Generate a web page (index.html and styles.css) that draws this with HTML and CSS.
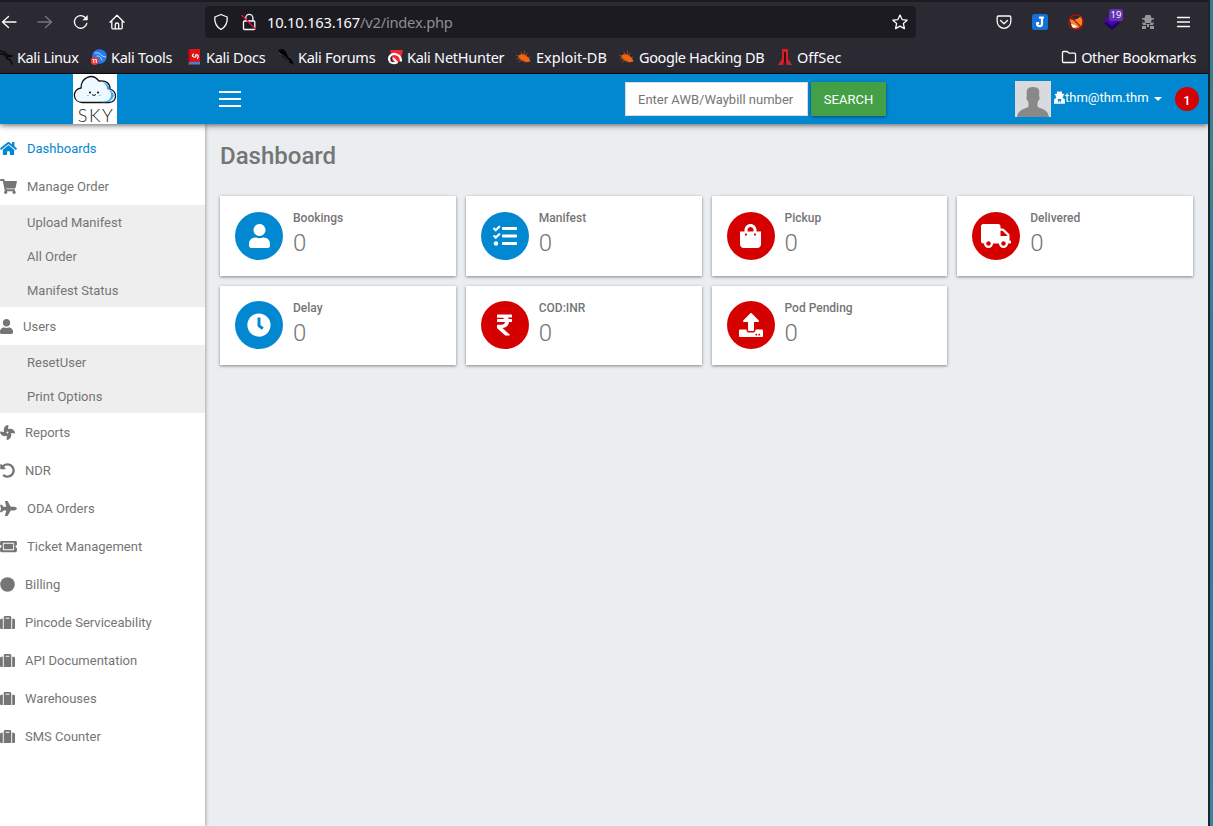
FILE: index.html
```html
<!DOCTYPE html>
<html lang="en">
<head>
<meta charset="utf-8">
<title>Dashboard</title>
<link rel="stylesheet" href="styles.css">
</head>
<body>
<svg class="defs" width="0" height="0">
  <symbol id="suitcase" viewBox="0 0 512 512"><path d="M128 480h256V80c0-26.500-21.500-48-48-48H176c-26.500 0-48 21.500-48 48v400zm64-384h128v32H192V96zm320 80v256c0 26.500-21.500 48-48 48h-48V128h48c26.500 0 48 21.500 48 48zM96 480H48c-26.500 0-48-21.500-48-48V176c0-26.500 21.500-48 48-48h48v352z"/></symbol>
  <symbol id="user" viewBox="0 0 448 512"><path d="M224 256c70.700 0 128-57.300 128-128S294.700 0 224 0 96 57.300 96 128s57.300 128 128 128zm89.600 32h-16.700c-22.200 10.200-46.900 16-72.900 16s-50.600-5.800-72.900-16h-16.700C60.200 288 0 348.200 0 422.400V464c0 26.500 21.500 48 48 48h352c26.500 0 48-21.500 48-48v-41.600c0-74.200-60.200-134.400-134.400-134.400z"/></symbol>
  <symbol id="bug" viewBox="0 0 16 16"><path d="M2 7Q5.500 3.500 9.500 6l3.500 3 1.500 3.500-4 .8-5-1.800-3-3z" fill="#f26411" stroke="none"/><path d="M1 10h3M3 13l3-2M5 3l1 3M8.500 2l-.5 4M11 4l-1 3M0 6l3 1.500M14 8l-2 1M8 13l-1-2" stroke="#a94d1e" stroke-width=".8" fill="none"/></symbol>
</svg>
<div class="window">
  <div class="browser">
    <div class="toolbar">
      <div class="nav">
        <svg width="16" height="16" viewBox="0 0 16 16"><path d="M15 8H1.500M7.500 2.500 1.500 8l6 5.500"/></svg>
        <svg class="dim" width="16" height="16" viewBox="0 0 16 16"><path d="M1 8h13.500M8.500 2.500l6 5.500-6 5.500"/></svg>
        <svg width="16" height="16" viewBox="0 0 16 16"><path d="M13.800 9.500A6.300 6.300 0 1 1 12 3.300l1.500 1.800"/><path d="M14.700 1v5.300H9.400z" class="solid"/></svg>
        <svg width="16" height="16" viewBox="0 0 16 16"><path d="M1 8.300 8 1.200l7 7.100M2.800 7v6.800q0 1 1 1h8.400q1 0 1-1V7M6.300 14.500v-4q0-1.500 1.700-1.500t1.700 1.500v4"/></svg>
      </div>
      <div class="urlbar">
        <svg width="16" height="18" viewBox="0 0 16 18"><path d="M8 1.500 14.200 4q.7 8.500-6.200 12.500Q1.100 12.500 1.800 4z"/></svg>
        <svg width="16" height="18" viewBox="0 0 16 18"><path d="M4.700 8V5a3.600 3.600 0 0 1 7.200 0v3M3.500 8h9.300q1 0 1 1v6.500q0 1-1 1H3.500q-1 0-1-1V9q0-1 1-1z"/><path d="M1 2.500 14.500 16" class="slash"/></svg>
        <div class="url">10.10.163.167<span>/v2/index.php</span></div>
        <svg class="star" width="16" height="16" viewBox="0 0 16 16"><path d="m8 1 2.100 4.600 5 .6-3.700 3.400 1 5L8 12.100l-4.400 2.500 1-5L.9 6.200l5-.6z"/></svg>
      </div>
      <div class="addons">
        <svg width="16" height="16" viewBox="0 0 16 16"><path d="M2.500 2h11q1.300 0 1.300 1.300V7.500a6.800 6.800 0 0 1-13.600 0V3.300Q1.200 2 2.500 2zM4.500 6.500 8 9.800l3.500-3.300"/></svg>
        <svg width="16" height="16" viewBox="0 0 16 16"><rect width="16" height="16" rx="2.500" fill="#1370d8" stroke="none"/><path d="M7.800 3.700h3.200M10 3.700v6a2.500 2.500 0 0 1-5 0v-.500h1.200" stroke-width="2.200"/></svg>
        <svg width="16" height="16" viewBox="0 0 16 16"><path d="m1.500 5 3.500 1 4-1 4.500-3 1 5-1 5-5.500 3-4-2z" fill="#f08a24" stroke="none"/><path d="m3 10 4 1 2 2-4 1z" fill="#fff" stroke="none"/><circle cx="8" cy="8" r="7.200" stroke="#b80d12"/><path d="m3 3 10 10" stroke="#b80d12"/></svg>
        <div class="layers"><svg width="16" height="16" viewBox="0 0 16 16"><path d="m0 9 8-5 8 5-8 7z" fill="#20006b" stroke="none"/><path d="m0 6 8-5 8 5-8 6z" fill="#4b06a8" stroke="none"/></svg><span>19</span></div>
        <svg width="16" height="16" viewBox="0 0 16 16"><path d="M5.500 1h5l1 3H14v1.500h-2L10.500 9h-5L4 5.500H2V4h2.500zM2 8.500h3L7 11H3zM14 8.500h-3L9 11h4zM2 15v-3h4v3zM10 15v-3h4v3zM7 10h2v3H7z" fill="#96959b" stroke="none"/></svg>
        <svg width="14" height="16" viewBox="0 0 14 16"><path d="M1.500 3.500h12M1.500 8h12M1.500 12.500h12"/></svg>
      </div>
    </div>
    <div class="bookmarks">
      <div class="bm tight"><svg width="16" height="16" viewBox="0 0 16 16"><path d="M2 2q6 0 8 4l5 1q-7 0-5 3 4 0 5 5M3 5q4-1 5 2" stroke="#09090b" stroke-width="1.600"/></svg>Kali Linux</div>
      <div class="bm"><svg width="16" height="16" viewBox="0 0 16 16"><circle cx="8.500" cy="7.500" r="7.300" fill="#2878f0" stroke="none"/><path d="M4 4q5-1 7 3l3.500 1M6 7q3-1 5 4" stroke="#b9dcff" stroke-width="1"/><circle cx="3.500" cy="12" r="4" fill="#ef3634" stroke="none"/><path d="M1.800 10.500h1v3M4.300 10.500h1v3" stroke="#fff" stroke-width="1"/></svg>Kali Tools</div>
      <div class="bm"><svg width="16" height="16" viewBox="0 0 16 16"><path d="M2 0h12v13H2z" fill="#e01414" stroke="none"/><path d="M2 0h2v16H2z" fill="#9f1018" stroke="none"/><path d="M3 13h11v2.500H3z" fill="#4084d6" stroke="none"/><path d="M7.500 5Q5 7.500 8 8t1.500-1.500Q10 5 11.500 6t0 3.500" stroke="#fff" stroke-width="1.100"/></svg>Kali Docs</div>
      <div class="bm"><svg width="16" height="16" viewBox="0 0 16 16"><path d="m0 1 5-1 3 3 2 5 4 3 2 5-4-2-3-3-4-3z" fill="#020203" stroke="none"/><path d="m1 4 5 3 5 5" stroke="#56555c" stroke-width=".7"/></svg>Kali Forums</div>
      <div class="bm"><svg width="16" height="16" viewBox="0 0 16 16"><path d="M3 1h13l-3 12H6z" fill="#f52735" stroke="none"/><path d="M2.500 11.500A5 4.800 0 0 1 9.500 5.500q4 1 4.500 6" stroke="#fff" stroke-width="2.300"/><path d="M3 13q3 2 7 .5L6.500 9.500" stroke="#fff" stroke-width="2"/></svg>Kali NetHunter</div>
      <div class="bm wide"><svg width="16" height="16"><use href="#bug"/></svg>Exploit-DB</div>
      <div class="bm tight"><svg width="16" height="16"><use href="#bug"/></svg>Google Hacking DB</div>
      <div class="bm wide"><svg width="16" height="16" viewBox="0 0 16 16"><path d="M5 0h6v10l4 6h-5l-1-4H7l-1 4H1l4-6z" fill="#d91f26" stroke="none"/><path d="M7 3h2v10H7z" fill="#420b10" stroke="none"/></svg>OffSec</div>
      <div class="bm tight"><svg width="16" height="16" viewBox="0 0 16 16"><path d="M2.500 2.500h3.700L8 4.200h5.500q1 0 1 1v7.300q0 1-1 1h-11q-1 0-1-1v-9q0-1 1-1z"/></svg>Other Bookmarks</div>
    </div>
  </div>
  <header class="header">
    <svg class="logo" width="44" height="50" viewBox="0 0 44 50"><path fill="#fff" d="M0 0h44v50H0z"/><path d="M9 28.500C-1 28-1 15 8 14 8 4 19-2 26 7c8-1 11 3 11 8 8 3 7 13-1 13.500z" fill="#edf8ff" stroke="#111" stroke-width="1.300"/><path d="M29 8q8 1 7 8 9 4 1 11-3 2-9 1 11 0 10-9-1-3-4-4 0-5-5-7z" fill="#36aaf5"/><path d="M19 20.500q2 2 4 0" stroke="#111" fill="none"/><circle cx="17" cy="18.500" r="1"/><circle cx="25" cy="18.500" r="1"/><path d="M14 21.500h2M26 21.500h2" stroke="#79cdfa"/><text x="22.300" y="48" text-anchor="middle" class="logo-text" textLength="35">SKY</text></svg>
    <div class="burger"><i></i><i></i><i></i></div>
    <input class="query" type="text" placeholder="Enter AWB/Waybill number">
    <button class="search">SEARCH</button>
    <svg class="avatar" width="36" height="36" viewBox="0 0 36 36"><path fill="#d8dadd" d="M0 0h36v36H0z"/><path d="M18 6c6 0 7 3 6 9 1 1 1 4-1 5-1 5-1 6 2 7 6 2 8 4 9 9H2c1-5 3-7 9-9 3-1 3-2 2-7-2-1-2-4-1-5-1-6 0-9 6-9z" fill="#898989"/></svg>
    <svg class="agent" width="11" height="13" viewBox="0 0 11 13"><path fill="#fff" fill-rule="evenodd" d="M3.500.3Q5.500 1 7.500.3L8.500 3h1.700v1H9.500Q9.300 6.300 8.500 7l2 .7Q11 9 11 12.700H0Q0 9 .5 7.700l2-.7Q1.700 6.300 1.500 4H.8V3h1.700zM3.500 8l1.300 4 .7-3 .7 3 1.300-4z"/></svg>
    <span class="email">thm@thm.thm</span>
    <i class="caret"></i>
    <span class="count">1</span>
  </header>
  <div class="body">
    <nav class="sidebar">
      <a class="item active"><svg width="17" height="15" viewBox="0 0 576 512"><path d="M280.370 148.260L96 300.110V464a16 16 0 0 0 16 16l112.060-.29a16 16 0 0 0 15.920-16V368a16 16 0 0 1 16-16h64a16 16 0 0 1 16 16v95.640a16 16 0 0 0 16 16.050L464 480a16 16 0 0 0 16-16V300L295.670 148.260a12.190 12.190 0 0 0-15.300 0zM571.600 251.470L488 182.560V44.050a12 12 0 0 0-12-12h-56a12 12 0 0 0-12 12v72.610L318.470 43a48 48 0 0 0-61 0L4.340 251.470a12 12 0 0 0-1.600 16.900l25.500 31A12 12 0 0 0 45.150 301l235.220-193.740a12.190 12.190 0 0 1 15.300 0L530.900 301a12 12 0 0 0 16.900-1.600l25.500-31a12 12 0 0 0-1.700-16.930z"/></svg>Dashboards</a>
      <a class="item"><svg width="17" height="15" viewBox="0 0 576 512"><path d="M528.120 301.319l47.273-208C578.806 78.301 567.391 64 551.990 64H159.208l-9.166-44.810C147.758 8.021 137.930 0 126.529 0H24C10.745 0 0 10.745 0 24v16c0 13.255 10.745 24 24 24h69.883l70.248 343.435C147.325 417.100 136 435.222 136 456c0 30.928 25.072 56 56 56s56-25.072 56-56c0-15.674-6.447-29.835-16.824-40h209.647C430.447 426.165 424 440.326 424 456c0 30.928 25.072 56 56 56s56-25.072 56-56c0-22.172-12.888-41.332-31.579-50.405l5.517-24.276c3.413-15.018-8.002-29.319-23.403-29.319H218.117l-6.545-32h293.145c11.206 0 20.920-7.754 23.403-18.681z"/></svg>Manage Order</a>
      <div class="sub"><a>Upload Manifest</a><a>All Order</a><a>Manifest Status</a></div>
      <a class="item"><svg width="13" height="15"><use href="#user"/></svg>Users</a>
      <div class="sub"><a>ResetUser</a><a>Print Options</a></div>
      <a class="item"><svg width="15" height="15" viewBox="0 0 512 512"><path d="M352.570 128c-28.090 0-54.090 4.520-77.060 12.860l12.410-123.110C289 7.310 279.810-1.180 269.330.130 189.630 10.130 128 77.640 128 159.430c0 28.090 4.520 54.090 12.860 77.060L17.750 224.080C7.310 223-1.180 232.190.130 242.670c10 79.700 77.510 141.330 159.300 141.330 28.090 0 54.090-4.520 77.060-12.860l-12.410 123.110c-1.050 10.430 8.110 18.930 18.590 17.620 79.700-10 141.330-77.510 141.330-159.300 0-28.090-4.520-54.090-12.860-77.060l123.110 12.410c10.440 1.050 18.930-8.110 17.620-18.590-10-79.700-77.510-141.330-159.300-141.330zM256 288a32 32 0 1 1 32-32 32 32 0 0 1-32 32z"/></svg>Reports</a>
      <a class="item"><svg width="15" height="15" viewBox="0 0 512 512"><path d="M255.545 8c-66.269.119-126.438 26.233-170.860 68.685L48.971 40.971C33.851 25.851 8 36.559 8 57.941V192c0 13.255 10.745 24 24 24h134.059c21.382 0 32.090-25.851 16.971-40.971l-41.750-41.750c30.864-28.899 70.801-44.907 113.230-45.273 92.398-.798 170.283 73.977 169.484 169.442C423.236 348.009 349.816 424 256 424c-41.127 0-79.997-14.678-110.630-41.556-4.743-4.161-11.906-3.908-16.368.553L89.340 422.659c-4.872 4.872-4.631 12.815.482 17.433C133.798 479.813 192.074 504 256 504c136.966 0 247.999-111.033 248-247.998C504.001 119.193 392.354 7.755 255.545 8z"/></svg>NDR</a>
      <a class="item"><svg width="17" height="15" viewBox="0 0 576 512"><path d="M480 192H365.710L260.610 8.060A16.014 16.014 0 0 0 246.710 0h-65.500c-10.630 0-18.300 10.170-15.380 20.390L214.860 192H112l-43.200-57.600c-3.020-4.030-7.770-6.400-12.800-6.400H16.010C5.600 128-2.040 137.780.490 147.880L32 256 .490 364.120C-2.040 374.220 5.600 384 16.010 384H56c5.040 0 9.780-2.370 12.800-6.400L112 320h102.860l-49.030 171.600c-2.920 10.220 4.750 20.400 15.380 20.400h65.500c5.740 0 11.040-3.080 13.890-8.060L365.710 320H480c35.350 0 96-28.650 96-64s-60.650-64-96-64z"/></svg>ODA Orders</a>
      <a class="item"><svg width="17" height="15" viewBox="0 0 576 512"><path d="M128 160h320v192H128V160zm400 96c0 26.510 21.490 48 48 48v96c0 26.510-21.490 48-48 48H48c-26.510 0-48-21.490-48-48v-96c26.510 0 48-21.490 48-48s-21.490-48-48-48v-96c0-26.510 21.490-48 48-48h480c26.510 0 48 21.490 48 48v96c-26.510 0-48 21.490-48 48zm-48-104c0-13.255-10.745-24-24-24H120c-13.255 0-24 10.745-24 24v208c0 13.255 10.745 24 24 24h336c13.255 0 24-10.745 24-24V152z"/></svg>Ticket Management</a>
      <a class="item"><svg width="15" height="15" viewBox="0 0 512 512"><circle cx="256" cy="256" r="248"/></svg>Billing</a>
      <a class="item"><svg width="15" height="15"><use href="#suitcase"/></svg>Pincode Serviceability</a>
      <a class="item"><svg width="15" height="15"><use href="#suitcase"/></svg>API Documentation</a>
      <a class="item"><svg width="15" height="15"><use href="#suitcase"/></svg>Warehouses</a>
      <a class="item"><svg width="15" height="15"><use href="#suitcase"/></svg>SMS Counter</a>
    </nav>
    <main class="main">
      <h1>Dashboard</h1>
      <div class="cards">
        <div class="card"><div class="disc blue"><svg width="21" height="24"><use href="#user"/></svg></div><div class="stat"><b>Bookings</b><span>0</span></div></div>
        <div class="card"><div class="disc blue"><svg width="24" height="24" viewBox="0 0 512 512"><path d="M139.610 35.500a12 12 0 0 0-17 0L58.930 98.810l-22.700-22.120a12 12 0 0 0-17 0L3.530 92.410a12 12 0 0 0 0 17l47.590 47.400a12.780 12.780 0 0 0 17.610 0l15.590-15.620L156.520 69a12.090 12.090 0 0 0 .09-17zm0 159.190a12 12 0 0 0-17 0l-63.680 63.720-22.700-22.100a12 12 0 0 0-17 0L3.530 252a12 12 0 0 0 0 17L51 316.500a12.770 12.770 0 0 0 17.600 0l15.700-15.690 72.200-72.220a12 12 0 0 0 .09-16.900zM64 368c-26.490 0-48.590 21.500-48.590 48S37.530 464 64 464a48 48 0 0 0 0-96zm432 16H208a16 16 0 0 0-16 16v32a16 16 0 0 0 16 16h288a16 16 0 0 0 16-16v-32a16 16 0 0 0-16-16zm0-320H208a16 16 0 0 0-16 16v32a16 16 0 0 0 16 16h288a16 16 0 0 0 16-16V80a16 16 0 0 0-16-16zm0 160H208a16 16 0 0 0-16 16v32a16 16 0 0 0 16 16h288a16 16 0 0 0 16-16v-32a16 16 0 0 0-16-16z"/></svg></div><div class="stat"><b>Manifest</b><span>0</span></div></div>
        <div class="card"><div class="disc red"><svg width="21" height="24" viewBox="0 0 448 512"><path d="M352 160v-32C352 57.420 294.579 0 224 0 153.420 0 96 57.420 96 128v32H0v272c0 44.183 35.817 80 80 80h288c44.183 0 80-35.817 80-80V160h-96zm-192-32c0-35.290 28.710-64 64-64s64 28.710 64 64v32H160v-32zm160 120c-13.255 0-24-10.745-24-24s10.745-24 24-24 24 10.745 24 24-10.745 24-24 24zm-192 0c-13.255 0-24-10.745-24-24s10.745-24 24-24 24 10.745 24 24-10.745 24-24 24z"/></svg></div><div class="stat"><b>Pickup</b><span>0</span></div></div>
        <div class="card"><div class="disc red"><svg width="30" height="24" viewBox="0 0 640 512"><path d="M624 352h-16V243.900c0-12.700-5.100-24.900-14.100-33.900L494 110.100c-9-9-21.200-14.100-33.900-14.100H416V48c0-26.500-21.500-48-48-48H48C21.500 0 0 21.500 0 48v320c0 26.500 21.500 48 48 48h16c0 53 43 96 96 96s96-43 96-96h128c0 53 43 96 96 96s96-43 96-96h48c8.800 0 16-7.200 16-16v-32c0-8.800-7.200-16-16-16zM160 464c-26.500 0-48-21.500-48-48s21.500-48 48-48 48 21.500 48 48-21.500 48-48 48zm320 0c-26.500 0-48-21.500-48-48s21.500-48 48-48 48 21.500 48 48-21.500 48-48 48zm80-208H416V144h44.100l99.900 99.900V256z"/></svg></div><div class="stat"><b>Delivered</b><span>0</span></div></div>
        <div class="card"><div class="disc blue"><svg width="24" height="24" viewBox="0 0 512 512"><path d="M256,8C119,8,8,119,8,256S119,504,256,504,504,393,504,256,393,8,256,8Zm92.490,313h0l-20,25a16,16,0,0,1-22.490,2.500h0l-67-49.720a40,40,0,0,1-15-31.230V112a16,16,0,0,1,16-16h32a16,16,0,0,1,16,16V256l58,42.500A16,16,0,0,1,348.490,321Z"/></svg></div><div class="stat"><b>Delay</b><span>0</span></div></div>
        <div class="card"><div class="disc red"><svg width="15" height="24" viewBox="0 0 320 512"><path d="M308 96c6.627 0 12-5.373 12-12V44c0-6.627-5.373-12-12-12H12C5.373 32 0 37.373 0 44v44.748c0 6.627 5.373 12 12 12h85.280c27.308 0 48.261 9.958 60.970 27.252H12c-6.627 0-12 5.373-12 12v40c0 6.627 5.373 12 12 12h158.757c-6.217 36.086-32.961 58.632-74.757 58.632H12c-6.627 0-12 5.373-12 12v53.012c0 3.349 1.400 6.546 3.861 8.818l165.052 152.356a12.001 12.001 0 0 0 8.139 3.182h82.562c10.924 0 16.166-13.408 8.139-20.818L116.871 319.906c76.499-2.340 131.144-53.395 138.318-127.906H308c6.627 0 12-5.373 12-12v-40c0-6.627-5.373-12-12-12h-58.690c-3.486-11.541-8.280-22.246-14.252-32H308z"/></svg></div><div class="stat"><b>COD:INR</b><span>0</span></div></div>
        <div class="card"><div class="disc red"><svg width="24" height="24" viewBox="0 0 512 512"><path d="M296 384h-80c-13.300 0-24-10.700-24-24V192h-87.700c-17.800 0-26.700-21.500-14.100-34.100L242.300 5.700c7.500-7.500 19.800-7.500 27.300 0l152.200 152.200c12.600 12.600 3.700 34.100-14.100 34.100H320v168c0 13.300-10.700 24-24 24zm216-8v112c0 13.300-10.700 24-24 24H24c-13.300 0-24-10.700-24-24V376c0-13.300 10.700-24 24-24h136v8c0 30.900 25.100 56 56 56h80c30.900 0 56-25.100 56-56v-8h136c13.300 0 24 10.700 24 24zm-124 88c0-11-9-20-20-20s-20 9-20 20 9 20 20 20 20-9 20-20zm64 0c0-11-9-20-20-20s-20 9-20 20 9 20 20 20 20-9 20-20z"/></svg></div><div class="stat"><b>Pod Pending</b><span>0</span></div></div>
      </div>
    </main>
  </div>
</div>
</body>
</html>
```
FILE: styles.css
```css
* { box-sizing: border-box; }
body { margin: 0; width: 1213px; height: 826px; overflow: hidden; background: linear-gradient(#327b91, #3c8198 20%, #3279a0 50%, #3783a0); font-family: Roboto, sans-serif; font-size: 13px; color: #757575; }
.defs { position: absolute; }
svg { display: block; flex: none; }
.window { width: 1210px; height: 826px; border-right: 2px solid #20242c; display: flex; flex-direction: column; overflow: hidden; }

/* Browser chrome */
.browser { height: 74px; flex: none; background: #2b2a33; border-top: 2px solid #1c1b22; border-bottom: 1px solid #0c0c0d; color: #fbfbfe; font-family: "Noto Sans", sans-serif; }
.browser svg { fill: none; stroke: #fbfbfe; stroke-width: 1.3; stroke-linecap: round; stroke-linejoin: round; }
.browser svg .solid { fill: #fbfbfe; stroke: none; }
.browser svg .slash { stroke: #e2123f; }
.browser svg.dim { stroke: #77767d; }
.toolbar { height: 40px; display: flex; align-items: center; }
.nav { width: 205px; display: flex; gap: 20px; padding-left: 1px; }
.urlbar { width: 711px; height: 32px; border-radius: 4px; background: #1c1b22; display: flex; align-items: center; gap: 12px; padding: 0 8px; }
.url { font-size: 14.7px; flex: 1; margin-left: -2px; letter-spacing: -.22px; }
.url span { color: #8f8e96; }
.addons { display: flex; gap: 20px; margin-left: 80px; align-items: center; }
.layers { position: relative; }
.layers span { position: absolute; left: 5px; top: -5px; width: 14px; height: 12px; border-radius: 2px; background: #6232b5; font-size: 9.5px; line-height: 12px; text-align: center; }
.bookmarks { height: 29px; display: grid; grid-template-columns: 94px 95px 92px 109px 129px 103px 158px 1fr auto; margin-left: -3px; padding-right: 12px; align-items: center; font-size: 14.5px; letter-spacing: -.25px; }
.bm { display: flex; gap: 4px; align-items: center; white-space: nowrap; }
.tight { letter-spacing: -.38px; }
.wide { letter-spacing: 0; }

/* Application header */
.header { height: 50px; flex: none; background: #0288d1; box-shadow: 0 1px 6px rgba(0,0,0,.65); position: relative; z-index: 1; display: flex; align-items: center; padding-left: 73px; }
.logo { overflow: visible; }
.logo-text { font: 300 18px Lato, sans-serif; fill: #222; }
.burger { width: 22px; height: 16px; margin-left: 102px; display: flex; flex-direction: column; justify-content: space-between; }
.burger i { height: 2px; background: #fff; }
.query { width: 183px; height: 34px; margin-left: 384px; border: 1px solid #dcdcdc; background: #fff; padding: 0 12px; font: 13px Roboto, sans-serif; }
.query::placeholder { color: #757575; opacity: 1; }
.search { width: 75px; height: 34px; margin-left: 3px; padding: 0; border: 0; background: #43a047; color: #fff; font: 13px Roboto, sans-serif; box-shadow: 0 1px 3px rgba(0,0,0,.45); }
.avatar { margin-left: 129px; }
.agent { margin-left: 3px; margin-bottom: 3px; }
.email { color: #fff; margin-bottom: 3px; width: 84px; }
.caret { border: 4px solid transparent; border-top-color: #fff; border-bottom: 0; margin-left: 5px; }
.count { width: 24px; height: 24px; border-radius: 50%; background: #d50000; color: #fff; margin-left: 13px; text-align: center; line-height: 27px; font-weight: 500; }

/* Sidebar */
.body { flex: 1; display: flex; position: relative; z-index: 0; }
.sidebar { width: 205px; background: #fff; padding-top: 5px; box-shadow: 0 1px 4px rgba(0,0,0,.45); z-index: 0; }
.item { height: 38px; display: flex; align-items: center; gap: 10px; }
.item svg { fill: #757575; }
.active { color: #0288d1; }
.active svg { fill: #0288d1; }
.sub { background: #eee; }
.sub a { display: flex; align-items: center; height: 34px; padding-left: 27px; }

/* Dashboard */
.main { flex: 1; background: #eaeef1; padding: 18px 15px 0; }
h1 { margin: 0; font-size: 24px; line-height: 28px; font-weight: 500; height: 54px; }
.cards { display: grid; grid-template-columns: repeat(4, 1fr); grid-template-rows: 80px 79px; gap: 10px; }
.card { background: #fff; box-shadow: 0 1px 3px rgba(0,0,0,.45); display: flex; align-items: center; padding-left: 15px; gap: 10px; }
.card:nth-child(n+5) { padding-bottom: 1px; }
.disc { width: 48px; height: 48px; border-radius: 50%; display: flex; align-items: center; justify-content: center; }
.disc svg { fill: #fff; }
.blue { background: #0288d1; }
.red { background: #d50000; }
.stat { display: flex; flex-direction: column; align-self: flex-start; padding-top: 15px; }
.stat b { font-size: 12px; line-height: 14px; font-weight: 500; }
.stat span { font-size: 24px; line-height: 28px; font-weight: 300; margin-top: 4px; }
```
